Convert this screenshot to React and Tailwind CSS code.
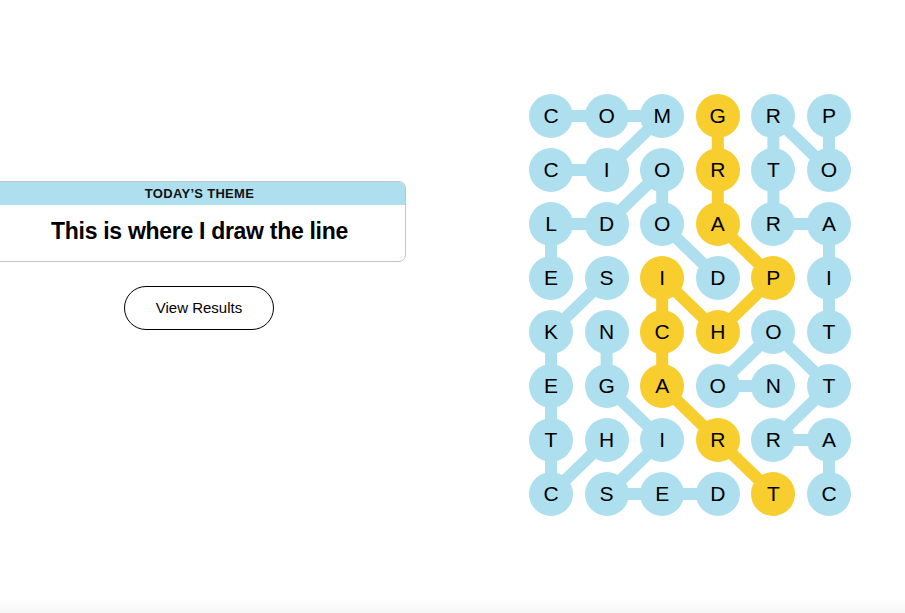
import React from 'react';

const BOARD = [
  'COMGRP',
  'CIORTO',
  'LDOARA',
  'ESIDPI',
  'KNCHOT',
  'EGAONT',
  'THIRRA',
  'CSEDTC',
];

const WORDS = [
  [[0, 0], [0, 1], [0, 2], [1, 1], [1, 0]],
  [[3, 3], [2, 2], [1, 2], [2, 1], [2, 0], [3, 0]],
  [[0, 5], [1, 5], [0, 4], [1, 4], [2, 4], [2, 5], [3, 5], [4, 5]],
  [[3, 1], [4, 0], [5, 0], [6, 0], [7, 0], [6, 1]],
  [[7, 3], [7, 2], [7, 1], [6, 2], [5, 1], [4, 1]],
  [[7, 5], [6, 5], [6, 4], [5, 5], [4, 4], [5, 3], [5, 4]],
];

const SPANGRAM = [[0, 3], [1, 3], [2, 3], [3, 4], [4, 3], [3, 2], [4, 2], [5, 2], [6, 3], [7, 4]];

const CELL = 44;
const STEP_X = 55.6;
const STEP_Y = 54;

const toPoints = (path) =>
  path.map(([r, c]) => `${CELL / 2 + c * STEP_X},${CELL / 2 + r * STEP_Y}`).join(' ');

const isSpangram = (r, c) => SPANGRAM.some(([sr, sc]) => sr === r && sc === c);

const ThemeCard = () => (
  <div className="w-[413px] -ml-[7px] rounded-r-[7px] border border-[#c4c4c4] overflow-hidden bg-white">
    <div className="h-[23px] bg-[#aedfee] flex items-center justify-center">
      <span className="text-[13px] font-bold tracking-[0.3px] text-[#121212]">
        TODAY&rsquo;S THEME
      </span>
    </div>
    <div className="h-[56px] flex items-center justify-center pb-[4px]">
      <h2 className="text-[23px] font-bold text-black tracking-[-0.3px]">
        This is where I draw the line
      </h2>
    </div>
  </div>
);

const Board = () => (
  <div className="relative">
    <svg className="absolute inset-0" width="322" height="422">
      {WORDS.map((path, i) => (
        <polyline
          key={i}
          points={toPoints(path)}
          fill="none"
          stroke="#aedfee"
          strokeWidth="12"
          strokeLinejoin="round"
        />
      ))}
      <polyline
        points={toPoints(SPANGRAM)}
        fill="none"
        stroke="#f8cd2e"
        strokeWidth="12"
        strokeLinejoin="round"
      />
    </svg>
    <div className="relative grid grid-cols-[repeat(6,44px)] auto-rows-[44px] gap-x-[11.6px] gap-y-[10px]">
      {BOARD.map((row, r) =>
        row.split('').map((letter, c) => (
          <div
            key={`${r}-${c}`}
            className={`w-[44px] h-[44px] rounded-full flex items-center justify-center text-[21px] text-black ${
              isSpangram(r, c) ? 'bg-[#f8cd2e]' : 'bg-[#aedfee]'
            }`}
          >
            {letter}
          </div>
        ))
      )}
    </div>
  </div>
);

export default function App() {
  return (
    <div className="h-[613px] w-[905px] overflow-hidden flex flex-col bg-white font-['Liberation_Sans',Arial,sans-serif]">
      <div className="flex-1 flex items-start">
        <div className="pt-[181px] flex flex-col">
          <ThemeCard />
          <button className="mt-[24px] ml-[124px] w-[150px] h-[44px] rounded-full border border-black text-[15px] text-black bg-white">
            View Results
          </button>
        </div>
        <div className="ml-[123px] mt-[94px]">
          <Board />
        </div>
      </div>
      <div className="h-[14px] bg-gradient-to-b from-white to-[#f6f6f6]" />
    </div>
  );
}
